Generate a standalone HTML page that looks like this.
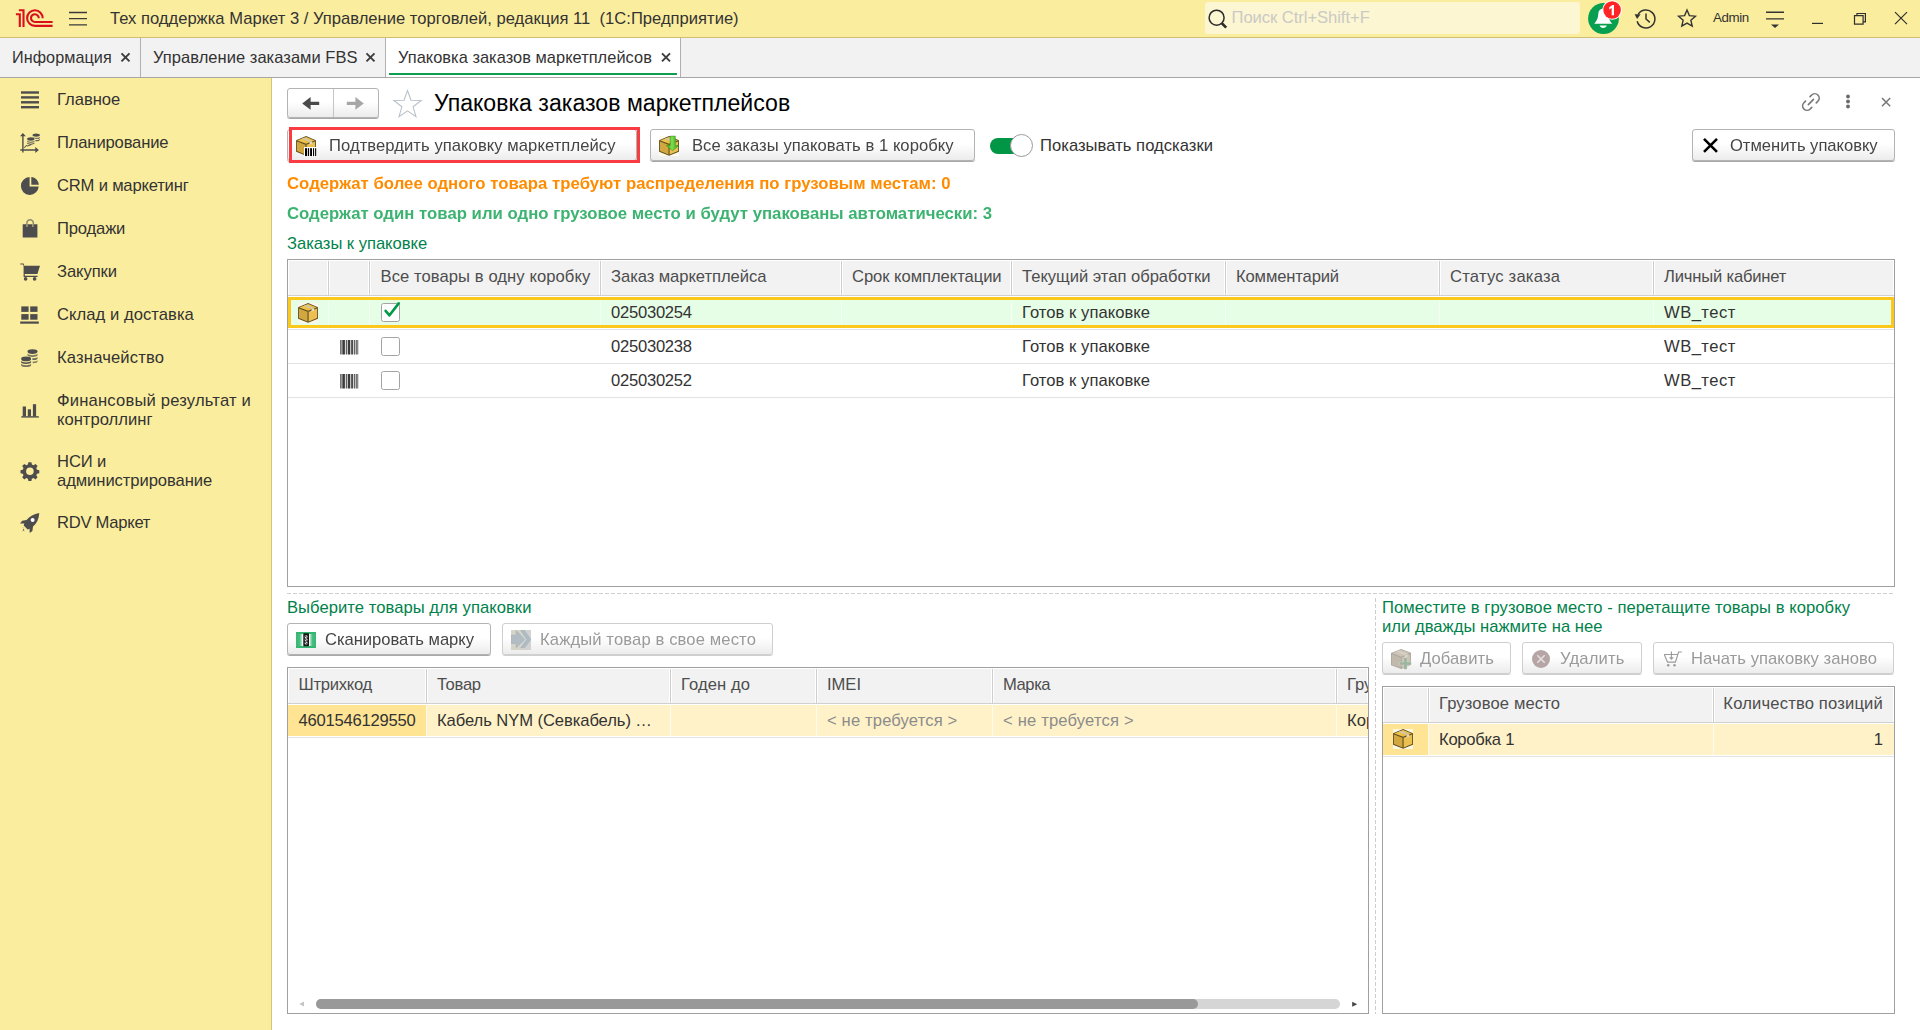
<!DOCTYPE html>
<html lang="ru">
<head>
<meta charset="utf-8">
<title>Упаковка заказов маркетплейсов</title>
<style>
*{box-sizing:border-box;margin:0;padding:0}
html,body{width:1920px;height:1030px;overflow:hidden;background:#fff}
body{position:relative;font-family:"Liberation Sans",sans-serif;font-size:16.6px;color:#333;line-height:19px}
.abs{position:absolute}
.t{position:absolute;white-space:nowrap;line-height:22px;height:22px}
/* title bar */
#titlebar{position:absolute;left:0;top:0;width:1920px;height:38px;background:#fbed9e;border-bottom:1px solid #d0bf70}
#tabbar{position:absolute;left:0;top:38px;width:1920px;height:40px;background:#f2f2f2;border-bottom:1px solid #a6a6a6}
#sidebar{position:absolute;left:0;top:78px;width:272px;height:952px;background:#fbed9e;border-right:1px solid #d4c474}
.tabsep{position:absolute;top:38px;width:1px;height:39px;background:#b4b4b4}
.sb{position:absolute;left:57px;white-space:nowrap;line-height:19px;color:#333}
/* buttons */
.btn{position:absolute;height:32px;border:1px solid #b3b3b3;border-radius:3px;background:linear-gradient(#ffffff 0%,#ffffff 45%,#ececec 100%);box-shadow:0 1px 0 #a9a9a9;}
.btn .lbl{position:absolute;top:6px;white-space:nowrap;line-height:20px;color:#454545;will-change:transform}
.btn.dis{border-color:#cfcfcf;box-shadow:0 1px 0 #cfcfcf}
.btn.dis .lbl{color:#9a9a9a}
/* tables */
.tbl{position:absolute;border:1px solid #a0a0a0;background:#fff;overflow:hidden}
.hdr{position:absolute;left:0;top:0;right:0;background:#f2f2f2;border:1px solid #fff;border-bottom:none}
.hline{position:absolute;left:0;right:0;height:1px;background:#d9d9d9}
.vsep{position:absolute;width:1px;background:#d0d0d0}
.green{color:#00824a}
</style>
</head>
<body>
<div id="titlebar">
<svg class="abs" style="left:0;top:0" width="100" height="37" viewBox="0 0 100 37">
<g fill="none" stroke="#d9101c" stroke-width="2.1">
<path d="M15.9 14.2 H19.8 V27.1"/>
<path d="M18.9 10.2 H23.5 V27.1"/>
<path d="M42.7 18.2 A7.8 7.8 0 1 0 34.9 25.9 H52.6"/>
<path d="M38.8 18.2 A3.9 3.9 0 1 0 34.9 22 H52.6"/>
</g>
<g stroke="#3a3a3a" stroke-width="1.4"><path d="M69 12.5H87M69 18.6H87M69 24.9H87"/></g>
</svg>
<div class="t" id="ttl" style="letter-spacing:0.014px;left:110px;top:8px;font-size:16.57px;color:#333;white-space:pre">Тех поддержка Маркет 3 / Управление торговлей, редакция 11  (1С:Предприятие)</div>
<div class="abs" style="left:1205px;top:2px;width:375px;height:32px;background:#fdf6d3;border-radius:3px"></div>
<svg class="abs" style="left:1205px;top:5px" width="26" height="26" viewBox="0 0 26 26"><circle cx="11.6" cy="12.700" r="7.500" fill="none" stroke="#2b2b2b" stroke-width="1.5"/><path d="M16.8 18.3L21.2 22.6" stroke="#2b2b2b" stroke-width="2.6" stroke-linecap="butt"/></svg>
<div class="t" id="srch" style="left:1231.500px;top:7px;font-size:16.600px;letter-spacing:-.05px;color:#c9c9c5">Поиск Ctrl+Shift+F</div>
<svg class="abs" style="left:1585px;top:0" width="40" height="37" viewBox="0 0 40 37">
<circle cx="18.5" cy="18.5" r="15.4" fill="#08a050"/>
<path d="M18.2 8.600c-2.900 0-4.700 2.200-4.900 5.200c-.2 3.600-1.100 6.800-4 9.900h17.800c-2.900-3.100-3.800-6.300-4-9.900c-.2-3-2-5.200-4.900-5.200z" fill="#fff"/>
<path d="M14.600 25.400h7.200c-.5 1.600-1.800 2.500-3.600 2.500s-3.100-.9-3.600-2.500z" fill="#fff"/>
<circle cx="27.100" cy="10" r="9.800" fill="#fff"/>
<circle cx="27.100" cy="10" r="8.800" fill="#ff2525"/>
<path d="M24.300 7.300l3.100-2.400h1.600v10.300h-2.300v-7.300l-2.400 1.600z" fill="#fff"/>
</svg>
<svg class="abs" style="left:1632px;top:4.900px" width="28" height="28" viewBox="0 0 28 28"><g fill="none" stroke="#333" stroke-width="1.5"><path d="M6.100 9.500A9 9 0 1 1 5.200 16.200"/><path d="M14 8.400V14l3.800 3.400" stroke-linejoin="miter"/></g><path d="M2.600 9.200l6 .1-3.500 4.600z" fill="#333"/></svg>
<svg class="abs" style="left:1676px;top:6.500px" width="22" height="22" viewBox="0 0 24 24"><path d="M12 3.300l2.600 6.100 6.600.6-5 4.400 1.500 6.500-5.700-3.400-5.700 3.400 1.500-6.500-5-4.400 6.600-.6z" fill="none" stroke="#333" stroke-width="1.5" stroke-linejoin="miter"/></svg>
<div class="t" id="adm" style="left:1713px;top:7px;font-size:13.330px;letter-spacing:-.38px;color:#333">Admin</div>
<svg class="abs" style="left:1762px;top:8px" width="26" height="24" viewBox="0 0 26 24"><path d="M4 4.200H22M4 10.900H22" stroke="#333" stroke-width="1.4"/><path d="M9 16.400h8l-4 3.600z" fill="#333"/></svg>
<svg class="abs" style="left:1805px;top:8px" width="110" height="24" viewBox="0 0 110 24"><g fill="none" stroke="#2f2f2f" stroke-width="1.2"><path d="M7 15.400H18"/><path d="M49.500 7.600h8.600v8.600h-8.600z"/><path d="M52 7.600V5.500h8.400v8.400h-2.300"/><path d="M90 4.200L102 16.200M102 4.200L90 16.200"/></g></svg>
</div>
<div id="tabbar">
<div class="abs" style="left:386px;top:0;width:294px;height:39px;background:#fff"></div>
<div class="abs" style="left:389px;top:35px;width:288px;height:2px;background:#0f9d4f"></div>
<div class="abs" style="left:140px;top:0;width:1px;height:39px;background:#b0b0b0"></div>
<div class="abs" style="left:385px;top:0;width:1px;height:39px;background:#b0b0b0"></div>
<div class="abs" style="left:680px;top:0;width:1px;height:39px;background:#b0b0b0"></div>
<div class="t" id="tab1" style="letter-spacing:0.069px;left:12px;top:8px;font-size:16.2px">Информация</div>
<div class="t" id="tab2" style="letter-spacing:0.043px;left:153px;top:8px;font-size:16.5px">Управление заказами FBS</div>
<div class="t" id="tab3" style="letter-spacing:0.040px;left:398px;top:8px;font-size:16.4px">Упаковка заказов маркетплейсов</div>
<svg class="abs" style="left:0;top:0" width="700" height="39" viewBox="0 0 700 39"><g stroke="#3c3c3c" stroke-width="1.9" fill="none"><path d="M121.500 15.300l8 8m0-8l-8 8"/><path d="M366.500 15.300l8 8m0-8l-8 8"/><path d="M662 15.300l8 8m0-8l-8 8"/></g></svg>
</div>
<div id="sidebar">
<svg class="abs" style="left:0;top:0" width="60" height="470" viewBox="0 78 60 470">
<g fill="#4d4d4d" stroke="none">
<!-- main: 4 lines -->
<rect x="21" y="91.300" width="18" height="2.400"/><rect x="21" y="96.200" width="18" height="2.400"/><rect x="21" y="101.100" width="18" height="2.400"/><rect x="21" y="106" width="18" height="2.400"/>
<!-- planning -->
<path d="M22.200 136.300v16.300h1.400v-16.300h2.200l-2.900-3.300-2.900 3.300z"/>
<path d="M20.300 149.300v1.400h15v2.200l3.600-2.900-3.600-2.900v2.200z"/>
<path d="M23.900 147.400l2.400-2.400 1.300.5 3.500-1.400.4.900-4 1.600-1.100-.5-1.800 1.900z"/>
<ellipse cx="30.800" cy="139" rx="3.700" ry="1.700"/><path d="M27.100 140.600c.8 1.500 6.600 1.500 7.400 0v1.200c-.8 1.500-6.600 1.500-7.400 0z" opacity=".72"/><path d="M27.100 142.500c.8 1.500 6.600 1.500 7.400 0v1.100c-.8 1.500-6.600 1.500-7.400 0z" opacity=".9"/>
<ellipse cx="36.200" cy="135.100" rx="3.700" ry="1.700"/><path d="M32.500 136.700c.8 1.500 6.600 1.500 7.400 0v1.200c-.6 1.200-3 1.400-4.500 1.100-.4-.9-1.500-1.400-2.900-1.500z" opacity=".72"/><path d="M35.400 139.900c1.500.3 3.900.1 4.500-1.100v1.200c-.5 1.200-2.800 1.500-4.500 1.200z" opacity=".85"/>
<!-- pie -->
<path d="M29.600 177.100a8.900 8.900 0 1 0 9.100 9.500h-9.100z"/><path d="M31.300 176.900v7.900h7.500c-.2-4.200-3.400-7.500-7.500-7.900z"/>
<!-- bag -->
<path d="M22.700 224.300h3.400v2.600h1.500v-2.600h4.800v2.600h1.500v-2.600h3.500v13.200H22.700z"/>
<path d="M26.100 227v-3.700c0-2.600 1.700-4.300 4-4.300s4 1.700 4 4.300V227h-1.500v-3.700c0-1.700-1-2.800-2.500-2.800s-2.500 1.100-2.500 2.800V227z" opacity=".62"/>
<!-- cart -->
<path d="M20.300 263.400h3.400l.5 2.300h15.800l-2.600 8.300H24.800v1.800h12.700v1.100H23.600v-10.700l-.5-1.600h-2.800z"/><circle cx="25.600" cy="278.900" r="1.800"/><circle cx="34.600" cy="278.900" r="1.800"/>
<!-- grid -->
<rect x="21.300" y="306.400" width="7.300" height="5.500"/><rect x="30.200" y="306.400" width="7.300" height="5.500"/><rect x="21.300" y="314.100" width="7.300" height="5.600"/><rect x="30.200" y="314.100" width="7.300" height="5.600"/><rect x="20.200" y="321.500" width="18.600" height="2.200"/>
<!-- coins -->
<ellipse cx="32.500" cy="351.600" rx="5" ry="2.300"/><path d="M27.500 353.800c.8 1.900 9.200 1.900 10 0v1.700c-.8 1.900-9.200 1.900-10 0z" opacity=".75"/><path d="M32.200 358.200c2 .3 4.700-.1 5.300-1.200v1.700c-.6 1.200-3 1.500-5 1.300z" opacity=".85"/><path d="M32.700 361.400c1.900.2 4.200-.2 4.800-1.200v1.600c-.6 1.200-2.800 1.600-4.800 1.400z" opacity=".7"/>
<ellipse cx="26.100" cy="358.900" rx="5" ry="2.300"/><path d="M21.100 361c.8 1.900 9.200 1.900 10 0v1.500c-.8 1.900-9.200 1.900-10 0z"/><path d="M21.100 363.800c.8 1.900 9.200 1.900 10 0v1.600c-.8 2-9.200 2-10 0z" opacity=".75"/>
<!-- bars -->
<rect x="22.700" y="406.500" width="3.300" height="10"/><rect x="27.800" y="409.300" width="3.200" height="7.200"/><rect x="32.900" y="404.200" width="3.200" height="12.300"/><rect x="21.300" y="416.200" width="17.500" height="1.400"/>
<!-- gear -->
<path fill-rule="evenodd" d="M28.400 462.300h3l.5 2.300 1.600.7 2-1.300 2.100 2.100-1.300 2 .7 1.600 2.300.5v3l-2.300.5-.7 1.600 1.300 2-2.100 2.100-2-1.300-1.600.7-.5 2.300h-3l-.5-2.300-1.600-.7-2 1.300-2.100-2.100 1.300-2-.7-1.600-2.300-.5v-3l2.300-.5.700-1.600-1.300-2 2.100-2.100 2 1.300 1.600-.7zM29.900 467.400a3.800 3.800 0 1 0 0 7.600a3.800 3.800 0 1 0 0-7.600z"/>
<!-- rocket -->
<path d="M39.300 513c-5.500.8-9.700 3.400-12.800 7.100l-4.300.6-2.200 2.700 4.300.2-.6 1.900 3.900 3.900 1.900-.6.200 4.300 2.700-2.200.6-4.300c3.700-3.100 5.900-7.600 6.300-13.600z"/>
<path d="M21.500 527.200l2.500.7-1.600 3.600 1.600-1.200.5 1.900-.7-4.500z"/>
</g>
<circle cx="32.600" cy="519.900" r="2" fill="#fff"/>
</svg>
<div class="sb" id="s0" style="letter-spacing:-0.016px;top:12px">Главное</div>
<div class="sb" id="s1" style="letter-spacing:-0.155px;top:55px">Планирование</div>
<div class="sb" id="s2" style="letter-spacing:-0.191px;top:98px">CRM и маркетинг</div>
<div class="sb" id="s3" style="letter-spacing:-0.158px;top:141px">Продажи</div>
<div class="sb" id="s4" style="letter-spacing:-0.089px;top:184px">Закупки</div>
<div class="sb" id="s5" style="letter-spacing:0.054px;top:227px">Склад и доставка</div>
<div class="sb" id="s6" style="letter-spacing:0.163px;top:270px">Казначейство</div>
<div class="sb" id="s7" style="letter-spacing:0.181px;top:313px">Финансовый результат и</div>
<div class="sb" id="s7b" style="letter-spacing:0.010px;top:332px">контроллинг</div>
<div class="sb" id="s8" style="letter-spacing:-0.097px;top:374px">НСИ и</div>
<div class="sb" id="s8b" style="letter-spacing:-0.070px;top:393px">администрирование</div>
<div class="sb" id="s9" style="letter-spacing:-0.264px;top:435px">RDV Маркет</div>
</div>
<svg width="0" height="0" style="position:absolute">
<defs>
<linearGradient id="gTop" x1="0" y1="0" x2="1" y2="1"><stop offset="0" stop-color="#f6cd55"/><stop offset="1" stop-color="#e6b53e"/></linearGradient>
<symbol id="box" viewBox="0 0 20 20">
<path d="M0.100 4.200L10.100 0.100 19.900 4.200 19.900 15.700 10.100 19.700 0.100 15.700z" fill="#5e4c1e"/>
<path d="M1.300 4.500L10.100 1.100 18.700 4.500 10.100 7.700z" fill="url(#gTop)"/>
<path d="M1 5.500L9.400 8.800 9.400 18.400 1 15.100z" fill="#d3a73f"/>
<path d="M10.800 8.800L19 5.500 19 15.100 10.800 18.400z" fill="#ecc050"/>
<path d="M9.400 8.600L10.800 8.600 10.800 18.600 9.400 18.600z" fill="#9c8034"/>
<path d="M5.600 2.800L8.200 1.800 16.200 5 13.600 6.100z" fill="#cfc7a8"/>
<path d="M13.600 6.300L16.200 5.200 16.200 8.300 14.900 7.800 13.600 9.300z" fill="#e4dcc0"/>
</symbol>
<symbol id="boxg" viewBox="0.700 0.500 18.700 18.800" preserveAspectRatio="none">
<path d="M0.700 4.300L10.200 0.500 19.400 4 19.400 15.400 10.300 19.300 0.700 15.700z" fill="#aaa49b"/>
<path d="M1.600 4.500L10.200 1.300 18.500 4.200 10.300 7.700z" fill="#cbc4b7"/>
<path d="M1.400 5.300L9.900 8.600 9.900 18.300 1.400 15.200z" fill="#c0b9ac"/>
<path d="M10.700 8.600L18.700 5.200 18.700 15 10.700 18.300z" fill="#c9c2b5"/>
<path d="M5.500 3L8.300 2 16.300 5.200 13.500 6.300z" fill="#d6d0c4"/>
<path d="M13.500 6.500L16.300 5.400 16.300 8.200 14.900 7.900 13.500 9.300z" fill="#dcd7cb"/>
</symbol>
</defs>
</svg>
<div id="content">
<div class="t" id="tgl" style="letter-spacing:0.038px;left:1040px;top:135px">Показывать подсказки</div>
<!-- nav buttons -->
<div class="btn" style="left:287px;top:88px;width:92px;height:30px"></div>
<div class="abs" style="left:333px;top:89px;width:1px;height:28px;background:#c4c4c4"></div>
<svg class="abs" style="left:287px;top:88px" width="92" height="30" viewBox="0 0 92 30">
<path d="M15.200 15.400l8.400-6.300v4.600h8.600v3.400h-8.600v4.600z" fill="#4a4a4a"/>
<path d="M76.800 15.400l-8.400-6.300v4.600h-8.600v3.400h8.600v4.600z" fill="#a6a6a6"/>
</svg>
<svg class="abs" style="left:391px;top:87px" width="34" height="32" viewBox="0 0 34 32"><path d="M16.500 3.500l3.500 9.700 10.200.3-8.100 6.300 2.900 9.900-8.500-5.800-8.500 5.800 2.900-9.900-8.100-6.300 10.200-.3z" fill="#fff" stroke="#b9c1c9" stroke-width="1.100" stroke-linejoin="miter"/></svg>
<div class="t" id="ptitle" style="letter-spacing:0.005px;left:434px;top:89px;font-size:23.1px;line-height:28px;height:28px;color:#000">Упаковка заказов маркетплейсов</div>
<svg class="abs" style="left:1796px;top:88px" width="100" height="28" viewBox="0 0 100 28">
<g transform="translate(14.900 14) rotate(-45)" fill="none" stroke="#787878" stroke-width="1.650" stroke-linecap="round"><path d="M3.200-4.400H5.450A4.400 4.400 0 0 1 5.450 4.400H3.200"/><path d="M-3.200-4.400H-5.450A4.400 4.400 0 0 0-5.450 4.400H-3.200"/><path d="M-3.600 0H3.600"/></g>
<g fill="#6a6a6a"><circle cx="52" cy="8.500" r="1.900"/><circle cx="52" cy="13.500" r="1.900"/><circle cx="52" cy="18.500" r="1.900"/></g>
<path d="M86 10l8.200 8.200M94.200 10l-8.200 8.200" stroke="#777" stroke-width="1.500" fill="none"/>
</svg>

<!-- command bar -->
<div class="btn" style="left:287px;top:129px;width:350px"><div class="lbl" id="b1" style="letter-spacing:0.067px;left:41px">Подтвердить упаковку маркетплейсу</div></div>
<svg class="abs" style="left:296px;top:136px" width="20" height="20"><use href="#box"/></svg>
<svg class="abs" style="left:303px;top:147px" width="15" height="11" viewBox="0 0 15 11"><rect x="1" y="0" width="13" height="10" fill="#fff"/><g fill="#000"><rect x="2" y="1.200" width="2" height="7.900"/><rect x="4.800" y="1.200" width="1.300" height="7.900"/><rect x="7.100" y="1.200" width="1.900" height="7.900"/><rect x="10" y="1.200" width="1.100" height="7.900"/><rect x="12.100" y="1.200" width="1.100" height="7.900"/></g></svg>
<div class="abs" style="left:289px;top:127px;width:351px;height:36px;border:3px solid #fb3b42"></div>

<div class="btn" style="left:650px;top:129px;width:325px"><div class="lbl" id="b2" style="letter-spacing:0.049px;left:41.300px">Все заказы упаковать в 1 коробку</div></div>
<div class="abs" style="left:659px;top:136px;width:20px;height:20px;background:#fdfbec"></div><svg class="abs" style="left:659px;top:136px" width="20" height="20"><use href="#box"/></svg>
<svg class="abs" style="left:664px;top:134px" width="18" height="18" viewBox="0 0 18 18"><defs><linearGradient id="gArr" x1="0" y1="0" x2="1" y2="0"><stop offset="0" stop-color="#3aa824"/><stop offset=".45" stop-color="#7be04a"/><stop offset="1" stop-color="#2f9a1c"/></linearGradient></defs><path d="M6.200 2.100h5.100v9.300h3.500l-6.200 5.300-6.300-5.300h3.900z" fill="url(#gArr)" stroke="#2a8f18" stroke-width=".5"/></svg>

<div class="abs" style="left:990px;top:138px;width:36px;height:16px;background:#009646;border-radius:8px"></div>
<div class="abs" style="left:1010px;top:134px;width:23px;height:23px;background:#fff;border:1px solid #9a9a9a;border-radius:50%"></div>


<div class="btn" style="left:1692px;top:129px;width:203px"><div class="lbl" id="b3" style="letter-spacing:-0.035px;left:37px">Отменить упаковку</div></div>
<svg class="abs" style="left:1700px;top:135px" width="22" height="22" viewBox="0 0 22 22"><path d="M4 3.800l13 13M17 3.800l-13 13" stroke="#000" stroke-width="2.600" fill="none"/></svg>

<div class="t" id="l1" style="letter-spacing:0.024px;left:287px;top:173px;font-weight:bold;color:#ff8c00;font-size:16.74px">Содержат более одного товара требуют распределения по грузовым местам: 0</div>
<div class="t" id="l2" style="letter-spacing:0.013px;left:287px;top:203px;font-weight:bold;color:#3cb371;font-size:16.74px">Содержат один товар или одно грузовое место и будут упакованы автоматически: 3</div>
<div class="t green" id="l3" style="letter-spacing:-0.030px;left:287px;top:233px">Заказы к упаковке</div>

<!-- table 1 -->
<div class="tbl" id="t1" style="left:287px;top:259px;width:1608px;height:328px">
<div class="hdr" style="height:35px"></div>
<div class="hline" style="top:35px;background:#d0d0d0"></div>
<div class="vsep" style="left:40px;top:1px;height:34px;background:#cdcdcd;box-shadow:1px 0 0 #fff,-1px 0 0 #fff"></div>
<div class="vsep" style="left:81px;top:1px;height:34px;background:#cdcdcd;box-shadow:1px 0 0 #fff,-1px 0 0 #fff"></div>
<div class="vsep" style="left:312px;top:1px;height:34px;background:#cdcdcd;box-shadow:1px 0 0 #fff,-1px 0 0 #fff"></div>
<div class="vsep" style="left:553px;top:1px;height:34px;background:#cdcdcd;box-shadow:1px 0 0 #fff,-1px 0 0 #fff"></div>
<div class="vsep" style="left:723px;top:1px;height:34px;background:#cdcdcd;box-shadow:1px 0 0 #fff,-1px 0 0 #fff"></div>
<div class="vsep" style="left:937px;top:1px;height:34px;background:#cdcdcd;box-shadow:1px 0 0 #fff,-1px 0 0 #fff"></div>
<div class="vsep" style="left:1151px;top:1px;height:34px;background:#cdcdcd;box-shadow:1px 0 0 #fff,-1px 0 0 #fff"></div>
<div class="vsep" style="left:1365px;top:1px;height:34px;background:#cdcdcd;box-shadow:1px 0 0 #fff,-1px 0 0 #fff"></div>
<div class="t" id="h1_0" style="letter-spacing:0.076px;left:92.5px;top:6px;color:#4d4d4d">Все товары в одну коробку</div>
<div class="t" id="h1_1" style="letter-spacing:-0.062px;left:323px;top:6px;color:#4d4d4d">Заказ маркетплейса</div>
<div class="t" id="h1_2" style="letter-spacing:-0.049px;left:564px;top:6px;color:#4d4d4d">Срок комплектации</div>
<div class="t" id="h1_3" style="letter-spacing:-0.028px;left:734px;top:6px;color:#4d4d4d">Текущий этап обработки</div>
<div class="t" id="h1_4" style="letter-spacing:-0.138px;left:948px;top:6px;color:#4d4d4d">Комментарий</div>
<div class="t" id="h1_5" style="letter-spacing:0.215px;left:1162px;top:6px;color:#4d4d4d">Статус заказа</div>
<div class="t" id="h1_6" style="letter-spacing:-0.189px;left:1376px;top:6px;color:#4d4d4d">Личный кабинет</div>
<div class="abs" style="left:0px;top:37px;width:1606px;height:31px;background:#e6fde6;border:3px solid #fcc81c"></div>
<div class="vsep" style="left:40px;top:40px;height:25px;background:#f4fff4"></div>
<div class="vsep" style="left:81px;top:40px;height:25px;background:#f4fff4"></div>
<div class="vsep" style="left:312px;top:40px;height:25px;background:#f4fff4"></div>
<div class="vsep" style="left:553px;top:40px;height:25px;background:#f4fff4"></div>
<div class="vsep" style="left:723px;top:40px;height:25px;background:#f4fff4"></div>
<div class="vsep" style="left:937px;top:40px;height:25px;background:#f4fff4"></div>
<div class="vsep" style="left:1151px;top:40px;height:25px;background:#f4fff4"></div>
<div class="vsep" style="left:1365px;top:40px;height:25px;background:#f4fff4"></div>
<div class="hline" style="top:69px;background:#e3e3e3"></div>
<div class="hline" style="top:103px;background:#e3e3e3"></div>
<div class="hline" style="top:137px;background:#e3e3e3"></div>
<div class="t" id="r0a" style="letter-spacing:-0.253px;left:323px;top:42px">025030254</div>
<div class="t" id="r0b" style="letter-spacing:0.046px;left:734px;top:42px">Готов к упаковке</div>
<div class="t" id="r0c" style="letter-spacing:0.471px;left:1376px;top:42px">WB_тест</div>
<div class="t" id="r1a" style="letter-spacing:-0.253px;left:323px;top:76px">025030238</div>
<div class="t" id="r1b" style="letter-spacing:0.046px;left:734px;top:76px">Готов к упаковке</div>
<div class="t" id="r1c" style="letter-spacing:0.471px;left:1376px;top:76px">WB_тест</div>
<div class="t" id="r2a" style="letter-spacing:-0.253px;left:323px;top:110px">025030252</div>
<div class="t" id="r2b" style="letter-spacing:0.046px;left:734px;top:110px">Готов к упаковке</div>
<div class="t" id="r2c" style="letter-spacing:0.471px;left:1376px;top:110px">WB_тест</div>
<div class="abs" style="left:93px;top:43px;width:19px;height:19px;border:1px solid #a3a3a3;border-radius:2.500px;background:#fff"></div>
<div class="abs" style="left:93px;top:77px;width:19px;height:19px;border:1px solid #a3a3a3;border-radius:2.500px;background:#fff"></div>
<div class="abs" style="left:93px;top:111px;width:19px;height:19px;border:1px solid #a3a3a3;border-radius:2.500px;background:#fff"></div>
<svg class="abs" style="left:93px;top:39px" width="24" height="24" viewBox="0 0 24 24"><path d="M4.600 11.800l3.900 4.500 9.200-11.900" fill="none" stroke="#009a46" stroke-width="2.600" stroke-linejoin="round" stroke-linecap="round"/></svg>
<div class="abs" style="left:10px;top:43px;width:20px;height:20px;background:#fbf8ea"></div><svg class="abs" style="left:10px;top:43px" width="20" height="20"><use href="#box"/></svg>
<svg class="abs" style="left:52px;top:80px" width="19" height="15" viewBox="0 0 19 15"><g fill="#3a3a3a"><rect x="0.300" y="0" width="1.200" height="14.500"/><rect x="2.300" y="0" width="2.600" height="14.500"/><rect x="5.800" y="0" width="1" height="14.500"/><rect x="7.700" y="0" width="2.600" height="14.500"/><rect x="11.200" y="0" width="1.700" height="14.500"/><rect x="13.800" y="0" width="1" height="14.500"/><rect x="15.700" y="0" width="1" height="14.500"/><rect x="17.400" y="0" width=".8" height="14.500"/></g></svg>
<svg class="abs" style="left:52px;top:114px" width="19" height="15" viewBox="0 0 19 15"><g fill="#3a3a3a"><rect x="0.300" y="0" width="1.200" height="14.500"/><rect x="2.300" y="0" width="2.600" height="14.500"/><rect x="5.800" y="0" width="1" height="14.500"/><rect x="7.700" y="0" width="2.600" height="14.500"/><rect x="11.200" y="0" width="1.700" height="14.500"/><rect x="13.800" y="0" width="1" height="14.500"/><rect x="15.700" y="0" width="1" height="14.500"/><rect x="17.400" y="0" width=".8" height="14.500"/></g></svg>
</div>
<div class="abs" style="left:287px;top:593px;width:1608px;height:1px;background:repeating-linear-gradient(90deg,#cdcdcd 0 4px,transparent 4px 6px)"></div>
<div class="abs" style="left:1375px;top:598px;width:1px;height:416px;background:repeating-linear-gradient(180deg,#cdcdcd 0 4px,transparent 4px 6px)"></div>
<div class="t green" id="l4" style="letter-spacing:0.051px;left:287px;top:597px">Выберите товары для упаковки</div>
<div class="btn" style="left:287px;top:623px;width:204px"><div class="lbl" id="b4" style="letter-spacing:-0.046px;left:37.300px">Сканировать марку</div></div>
<svg class="abs" style="left:296px;top:632px" width="20" height="16" viewBox="0 0 20 16"><defs><linearGradient id="gS" x1="0" y1="0" x2="1" y2="0"><stop offset="0" stop-color="#38b772"/><stop offset=".18" stop-color="#46be80"/><stop offset=".3" stop-color="#bfe8d1"/><stop offset=".7" stop-color="#bfe8d1"/><stop offset=".82" stop-color="#46be80"/><stop offset="1" stop-color="#38b772"/></linearGradient></defs><rect x="0" y="0" width="20" height="16" fill="#35b56f"/><rect x="0" y="2" width="20" height="12" fill="url(#gS)"/><rect x="6.100" y="2" width="7.900" height="12" fill="#f6fcf8"/><rect x="7.300" y="1.300" width="5.700" height="13" rx=".7" fill="#141414"/><g fill="#e9e9e9"><circle cx="10.100" cy="4.700" r="1.500"/><circle cx="10.100" cy="7.800" r="1.500"/><circle cx="10.100" cy="10.900" r="1.500"/></g><path d="M8.300 3.600l3.600 2.400M8.300 6.800l3.600 2.300M8.300 9.900l3.600 2.400" stroke="#333" stroke-width=".9"/></svg>
<div class="btn dis" style="left:502px;top:623px;width:271px"><div class="lbl" id="b5" style="letter-spacing:0.127px;left:37px">Каждый товар в свое место</div></div>
<svg class="abs" style="left:511px;top:630px" width="20" height="20" viewBox="0 0 20 20"><rect width="11" height="20" fill="#d6d4c7"/><rect x="11" width="9" height="20" fill="#d2d2d2"/><path d="M0.100 5.200H5.200V0.500L13.700 9.500 5.200 17.700V13.400H0.100z" fill="#b1bcc4" stroke="#a3b0ba" stroke-width=".6"/><path d="M9.800 0.500H13.500L19.800 9.500 13.500 17.700H9.800L16 9.500z" fill="#afbbc3" stroke="#a3b0ba" stroke-width=".6"/></svg>
<!-- table 2 -->
<div class="tbl" id="t2" style="left:287px;top:667px;width:1082px;height:347px">
<div class="hdr" style="height:35px"></div>
<div class="hline" style="top:35px;background:#d0d0d0"></div>
<div class="vsep" style="left:138px;top:1px;height:34px;background:#cdcdcd;box-shadow:1px 0 0 #fff,-1px 0 0 #fff"></div>
<div class="vsep" style="left:382px;top:1px;height:34px;background:#cdcdcd;box-shadow:1px 0 0 #fff,-1px 0 0 #fff"></div>
<div class="vsep" style="left:528px;top:1px;height:34px;background:#cdcdcd;box-shadow:1px 0 0 #fff,-1px 0 0 #fff"></div>
<div class="vsep" style="left:704px;top:1px;height:34px;background:#cdcdcd;box-shadow:1px 0 0 #fff,-1px 0 0 #fff"></div>
<div class="vsep" style="left:1048px;top:1px;height:34px;background:#cdcdcd;box-shadow:1px 0 0 #fff,-1px 0 0 #fff"></div>
<div class="abs" style="left:0;top:37px;width:1080px;height:31px;background:#fff2c8"></div>
<div class="abs" style="left:0;top:37px;width:138px;height:31px;background:#ffe494"></div>
<div class="vsep" style="left:138px;top:37px;height:31px;background:#fffaf0"></div>
<div class="vsep" style="left:382px;top:37px;height:31px;background:#fffaf0"></div>
<div class="vsep" style="left:528px;top:37px;height:31px;background:#fffaf0"></div>
<div class="vsep" style="left:704px;top:37px;height:31px;background:#fffaf0"></div>
<div class="vsep" style="left:1048px;top:37px;height:31px;background:#fffaf0"></div>
<div class="hline" style="top:69px;background:#e3e3e3"></div>
<div class="t" id="h2_0" style="letter-spacing:-0.262px;left:10.5px;top:6px;color:#4d4d4d">Штрихкод</div>
<div class="t" id="h2_1" style="letter-spacing:-0.272px;left:149px;top:6px;color:#4d4d4d">Товар</div>
<div class="t" id="h2_2" style="letter-spacing:0.095px;left:393px;top:6px;color:#4d4d4d">Годен до</div>
<div class="t" id="h2_3" style="letter-spacing:-0.031px;left:539px;top:6px;color:#4d4d4d">IMEI</div>
<div class="t" id="h2_4" style="letter-spacing:-0.447px;left:715px;top:6px;color:#4d4d4d">Марка</div>
<div class="t" id="h2_5" style="left:1059px;top:6px;color:#4d4d4d">Грузовое место</div>
<div class="t" id="c2_0" style="letter-spacing:-0.221px;left:10.5px;top:42px">4601546129550</div>
<div class="t" id="c2_1" style="letter-spacing:-0.079px;left:149px;top:42px">Кабель NYM (Севкабель) …</div>
<div class="t" id="c2_3" style="letter-spacing:0.144px;left:539px;top:42px;color:#8c8c8c">&lt; не требуется &gt;</div>
<div class="t" id="c2_4" style="letter-spacing:0.168px;left:715px;top:42px;color:#8c8c8c">&lt; не требуется &gt;</div>
<div class="t" id="c2_5" style="left:1059px;top:42px">Коробка 1</div>
<div class="abs" style="left:28px;top:331px;width:1024px;height:10px;border-radius:5px;background:#d5d5d5"></div>
<div class="abs" style="left:28px;top:331px;width:882px;height:10px;border-radius:5px;background:#999"></div>
<svg class="abs" style="left:10px;top:332px" width="8" height="8" viewBox="0 0 8 8"><path d="M1.300 4l4.700-2.500v5z" fill="#c4c4c4"/></svg>
<svg class="abs" style="left:1063px;top:332px" width="8" height="8" viewBox="0 0 8 8"><path d="M6.200 4.300L1.200 1.800v5z" fill="#444"/></svg>
</div>
<div class="t green" id="l5" style="letter-spacing:0.059px;left:1382px;top:597px">Поместите в грузовое место - перетащите товары в коробку</div><div class="t green" id="l5b" style="letter-spacing:0.030px;left:1382px;top:615.500px">или дважды нажмите на нее</div>
<div class="btn dis" style="left:1382px;top:642px;width:129px"><div class="lbl" id="b6" style="letter-spacing:0.082px;left:37px">Добавить</div></div>
<div class="btn dis" style="left:1522px;top:642px;width:120px"><div class="lbl" id="b7" style="letter-spacing:0.163px;left:37px">Удалить</div></div>
<div class="btn dis" style="left:1653px;top:642px;width:241px"><div class="lbl" id="b8" style="letter-spacing:0.065px;left:37px">Начать упаковку заново</div></div>
<svg class="abs" style="left:1391px;top:649px" width="20" height="20"><use href="#boxg"/></svg><svg class="abs" style="left:1399px;top:657px" width="13" height="13" viewBox="0 0 13 13"><path d="M5.100 0.900h2.700v4.300H12v2.600H7.800v4.300H5.100V7.800H1V5.200h4.100z" fill="#9ab5a0" stroke="#ddd8cc" stroke-width=".9" paint-order="stroke"/></svg>
<svg class="abs" style="left:1531px;top:649px" width="20" height="20" viewBox="0 0 20 20"><circle cx="10" cy="10" r="9" fill="#b5a5a5"/><path d="M6.300 6.300l7.400 7.400M13.700 6.300l-7.400 7.400" stroke="#e9e2e2" stroke-width="1.500"/></svg>
<svg class="abs" style="left:1661px;top:648px" width="22" height="22" viewBox="0 0 22 22"><g fill="none" stroke="#9b9b9b" stroke-width="1.150"><path d="M3 6.500H16.800M3.300 6.500L6.500 14.100H14.400L17.600 4H20.800"/><path d="M10.400 3.500V10"/></g><path d="M8 9.200H12.800L10.400 11.900z" fill="#9b9b9b"/><circle cx="7.200" cy="17.300" r="1.250" fill="#9b9b9b"/><circle cx="13.500" cy="17.300" r="1.250" fill="#9b9b9b"/></svg>
<!-- table 3 -->
<div class="tbl" id="t3" style="left:1382px;top:686px;width:513px;height:328px">
<div class="hdr" style="height:35px"></div>
<div class="hline" style="top:35px;background:#d0d0d0"></div>
<div class="vsep" style="left:45px;top:1px;height:34px;background:#cdcdcd;box-shadow:1px 0 0 #fff,-1px 0 0 #fff"></div>
<div class="vsep" style="left:330px;top:1px;height:34px;background:#cdcdcd;box-shadow:1px 0 0 #fff,-1px 0 0 #fff"></div>
<div class="abs" style="left:0;top:37px;width:511px;height:31px;background:#fff2c8"></div>
<div class="abs" style="left:0;top:37px;width:45px;height:31px;background:#ffe494"></div>
<div class="vsep" style="left:45px;top:37px;height:31px;background:#fffaf0"></div>
<div class="vsep" style="left:330px;top:37px;height:31px;background:#fffaf0"></div>
<div class="hline" style="top:69px;background:#e3e3e3"></div>
<div class="t" id="h3_0" style="letter-spacing:0.134px;left:56px;top:6px;color:#4d4d4d">Грузовое место</div>
<div class="t" id="h3_1" style="letter-spacing:0.168px;right:11px;top:6px;color:#4d4d4d">Количество позиций</div>
<div class="t" id="c3_0" style="letter-spacing:-0.273px;left:56px;top:42px">Коробка 1</div>
<div class="t" id="c3_1" style="right:11px;top:42px">1</div>
<div class="abs" style="left:10px;top:42px;width:20px;height:20px;background:#fdf8e4"></div><svg class="abs" style="left:10px;top:42px" width="20" height="20"><use href="#box"/></svg>
</div>
</div>

</body>
</html>
